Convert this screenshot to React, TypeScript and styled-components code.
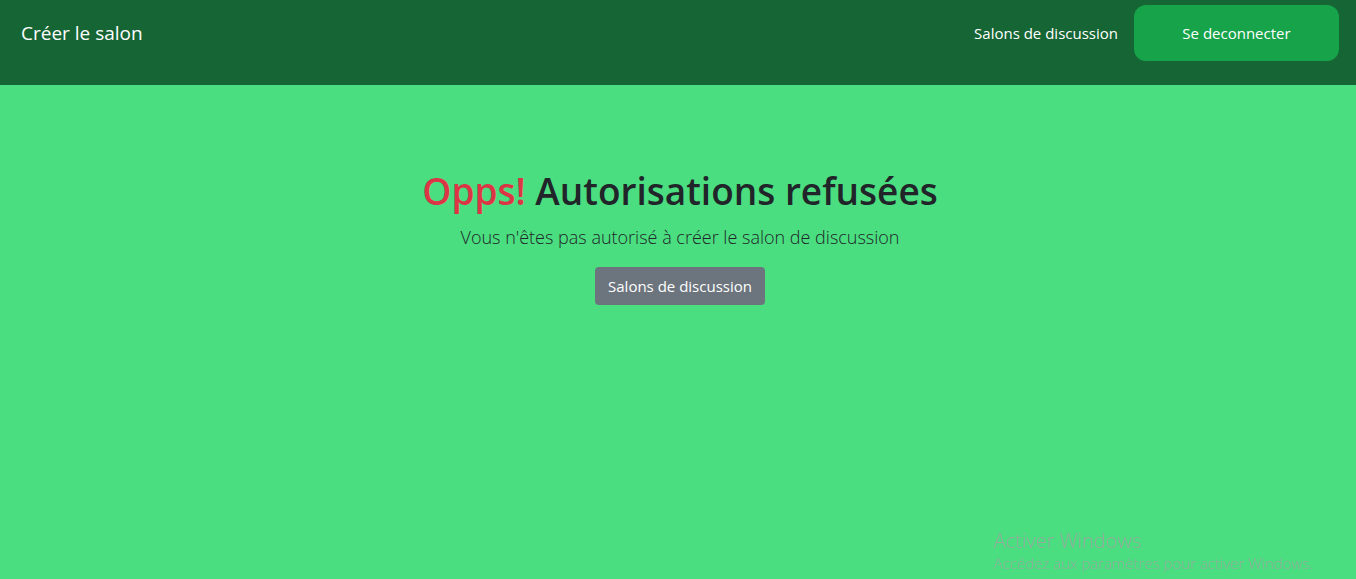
import React from "react";
import styled, { createGlobalStyle } from "styled-components";

const GlobalStyle = createGlobalStyle`
  *, *::before, *::after { box-sizing: border-box; }
  body {
    margin: 0;
    background: #4ade80;
    color: #212529;
    font-family: "Segoe UI", "Open Sans", "Noto Sans", sans-serif;
    font-size: 16px;
    line-height: 24px;
  }
`;

const Page = styled.div`
  min-height: 100vh;
  display: flex;
  flex-direction: column;
`;

const Header = styled.header`
  display: flex;
  justify-content: space-between;
  align-items: center;
  padding: 5px 17px 24px 21px;
  background: #166534;
  color: #fff;
`;

const Brand = styled.a`
  color: inherit;
  font-size: 19px;
  text-decoration: none;
`;

const Nav = styled.nav`
  display: flex;
  align-items: center;
  gap: 16px;
`;

const NavLink = styled.a`
  color: inherit;
  font-size: 15px;
  text-decoration: none;
`;

const LogoutButton = styled.button`
  min-width: 205px;
  height: 56px;
  padding: 0 48px;
  border: 0;
  border-radius: 12px;
  background: #16a34a;
  color: #fff;
  font: inherit;
  font-size: 15px;
  white-space: nowrap;
  cursor: pointer;
`;

const Main = styled.main`
  flex: 1;
  display: flex;
  flex-direction: column;
  align-items: center;
  padding: 82px 0 0 4px;
  text-align: center;
`;

const Title = styled.h1`
  margin: 0 0 8px;
  font-size: 37px;
  font-weight: 600;
  line-height: 48px;
`;

const Danger = styled.span`
  color: #dc3545;
`;

const Lead = styled.p`
  margin: 0 0 16px;
  font-size: 18px;
  font-weight: 300;
  line-height: 28px;
`;

const RoomsLink = styled.a`
  min-width: 170px;
  padding: 7px 12px;
  border-radius: 4px;
  background: #6c757d;
  color: #fff;
  font-size: 15px;
  text-decoration: none;
`;

const Watermark = styled.aside`
  position: fixed;
  right: 43px;
  bottom: 6px;
  color: #93aa9c;
  font-weight: 300;
  pointer-events: none;
`;

const WatermarkTitle = styled.p`
  margin: 0;
  font-size: 20px;
  line-height: 24px;
`;

const WatermarkText = styled.p`
  margin: 0;
  font-size: 15px;
  line-height: 20px;
`;

export default function App() {
  return (
    <Page>
      <GlobalStyle />
      <Header>
        <Brand href="#creer">Créer le salon</Brand>
        <Nav>
          <NavLink href="#salons">Salons de discussion</NavLink>
          <LogoutButton type="button">Se deconnecter</LogoutButton>
        </Nav>
      </Header>
      <Main>
        <Title>
          <Danger>Opps!</Danger> Autorisations refusées
        </Title>
        <Lead>Vous n'êtes pas autorisé à créer le salon de discussion</Lead>
        <RoomsLink href="#salons">Salons de discussion</RoomsLink>
      </Main>
      <Watermark>
        <WatermarkTitle>Activer Windows</WatermarkTitle>
        <WatermarkText>Accédez aux paramètres pour activer Windows.</WatermarkText>
      </Watermark>
    </Page>
  );
}
